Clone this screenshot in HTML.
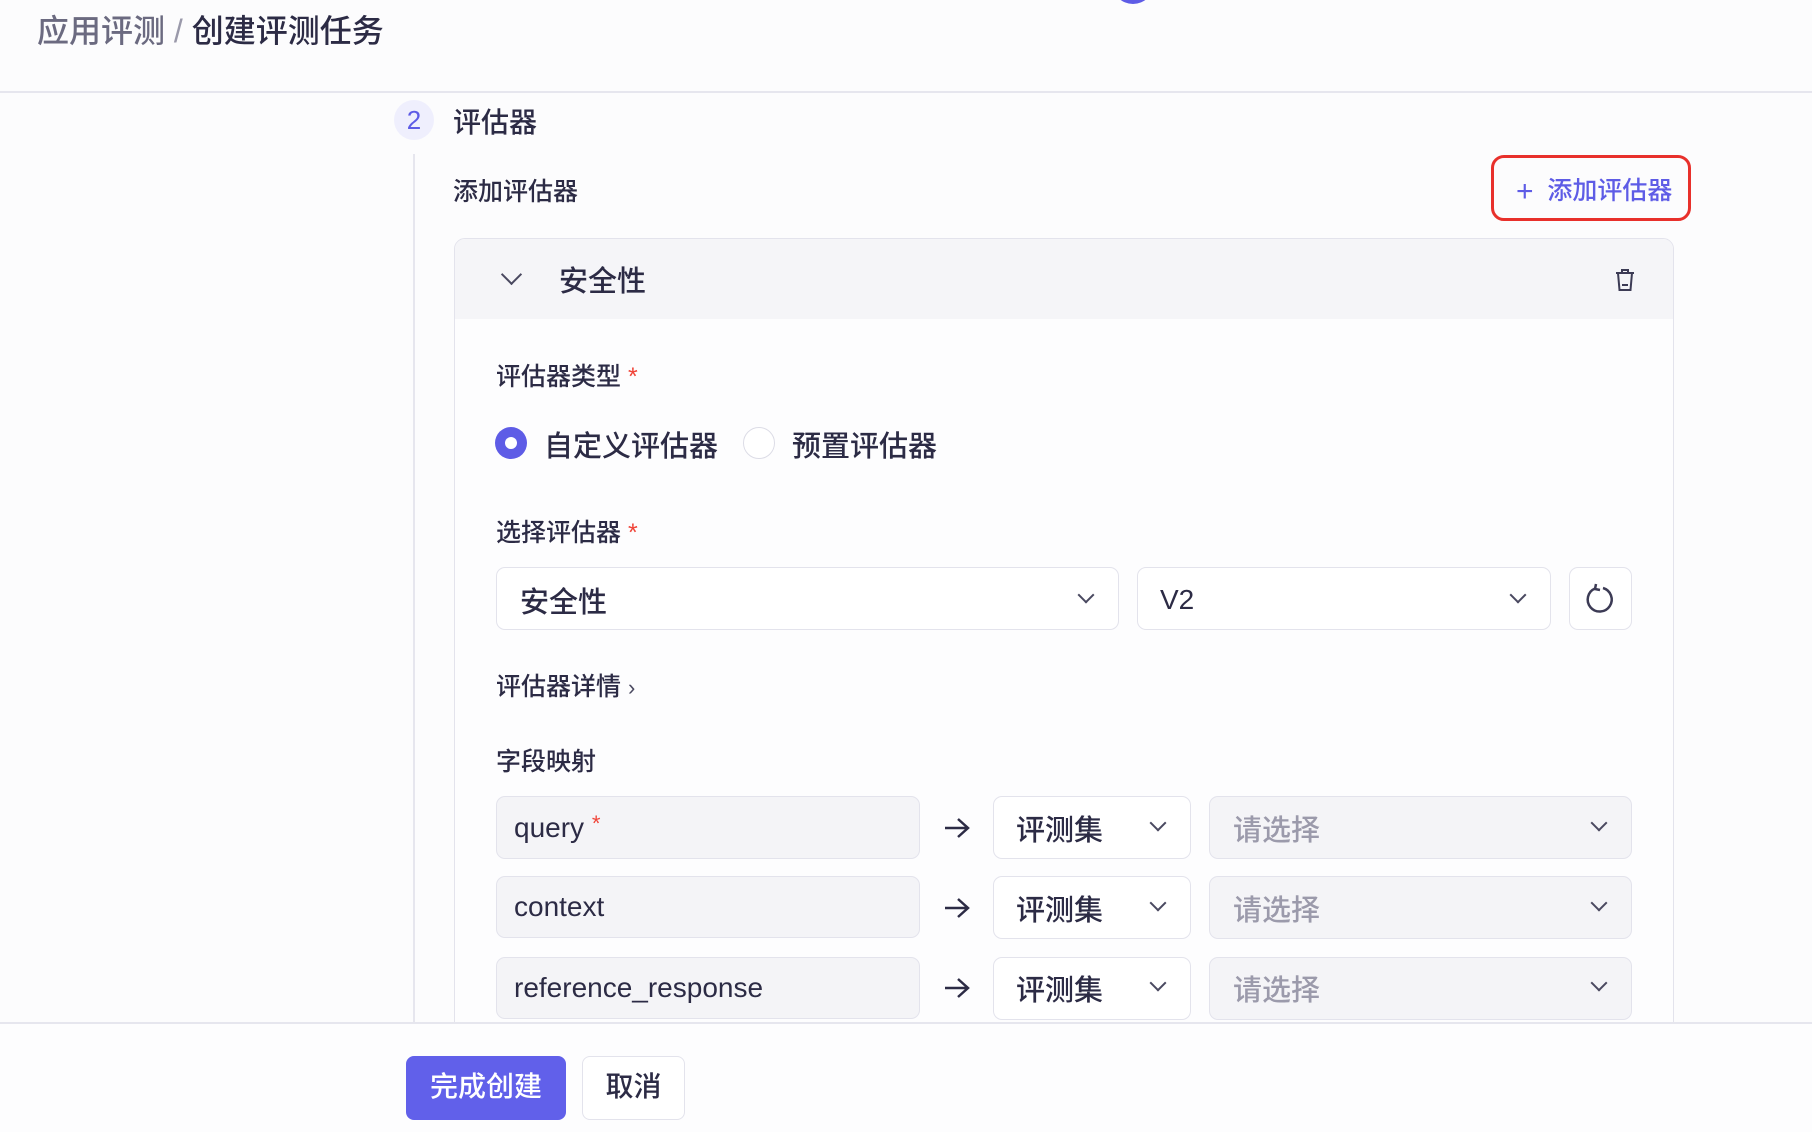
<!DOCTYPE html>
<html><head><meta charset="utf-8"><style>
*{box-sizing:border-box;margin:0;padding:0}
body{width:1812px;height:1132px;overflow:hidden;background:#fcfcfd;font-family:"Liberation Sans","Noto Sans CJK SC",sans-serif;color:#2c2b45;position:relative;font-weight:500}
.a{position:absolute;white-space:nowrap}
.box{position:absolute;border:1.5px solid #e3e3ec;border-radius:9px;background:#fff}
.g{background:#f4f4f7}
.chev{position:absolute;width:12px;height:12px;border-right:2px solid #4a4960;border-bottom:2px solid #4a4960;transform:rotate(45deg)}
.star{color:#f04438}
</style></head><body>
<div class="a" style="left:37px;top:6px;font-size:32px;color:#6b6a80">应用评测 <span style="color:#9a99aa;font-weight:400">/</span> <span style="color:#2c2b45">创建评测任务</span></div>
<div class="a" style="left:1112px;top:-38px;width:42px;height:42px;border-radius:50%;background:#5e5ce6"></div>
<div class="a" style="left:0;top:91px;width:1812px;height:2px;background:#e6e6ee"></div>
<div class="a" style="left:394px;top:100px;width:40px;height:40px;border-radius:50%;background:#efeffd;color:#5e5ce6;font-size:26px;text-align:center;line-height:40px">2</div>
<div class="a" style="left:453px;top:101px;font-size:28px">评估器</div>
<div class="a" style="left:413px;top:154px;width:2px;height:870px;background:#e6e6ee"></div>
<div class="a" style="left:453px;top:172px;font-size:25px">添加评估器</div>
<div class="a" style="left:1491px;top:155px;width:200px;height:66px;border:3px solid #e8302b;border-radius:13px"></div>
<div class="a" style="left:1516px;top:171px;font-size:25px;color:#5e5ce6"><span style="font-size:30px;font-weight:300;position:relative;top:2px">+</span>&nbsp; 添加评估器</div>
<div class="a" style="left:454px;top:238px;width:1220px;height:820px;border:1.5px solid #e3e3ec;border-radius:11px;background:#fdfdfe;overflow:hidden">
 <div style="height:80px;background:#f5f5f8"></div>
</div>
<div class="chev" style="left:504px;top:267px;width:15px;height:15px"></div>
<div class="a" style="left:559px;top:258px;font-size:29px">安全性</div>
<svg class="a" style="left:1614px;top:268px" width="22" height="24" viewBox="0 0 22 24" fill="none" stroke="#3c3b55" stroke-width="2"><path d="M2 5h18M8 5V2h6v3M4 5l1.5 17h11L18 5M8 17h6"/></svg>
<div class="a" style="left:496px;top:357px;font-size:25px">评估器类型 <span class="star">*</span></div>
<div class="a" style="left:495px;top:427px;width:32px;height:32px;border-radius:50%;background:#5e5ce6"><div style="margin:10px;width:12px;height:12px;border-radius:50%;background:#fff"></div></div>
<div class="a" style="left:544px;top:423px;font-size:29px">自定义评估器</div>
<div class="a" style="left:743px;top:427px;width:32px;height:32px;border-radius:50%;border:1.5px solid #dcdce6;background:#fff"></div>
<div class="a" style="left:792px;top:423px;font-size:29px">预置评估器</div>
<div class="a" style="left:496px;top:513px;font-size:25px">选择评估器 <span class="star">*</span></div>
<div class="box" style="left:496px;top:567px;width:623px;height:63px"></div>
<div class="a" style="left:520px;top:579px;font-size:29px">安全性</div>
<div class="chev" style="left:1080px;top:589px"></div>
<div class="box" style="left:1137px;top:567px;width:414px;height:63px"></div>
<div class="a" style="left:1160px;top:584px;font-size:28px">V2</div>
<div class="chev" style="left:1512px;top:589px"></div>
<div class="box" style="left:1569px;top:567px;width:63px;height:63px"></div>
<svg class="a" style="left:1584px;top:582px" width="32" height="33" viewBox="0 0 32 33" fill="none" stroke="#3c3b55" stroke-width="2.5"><path d="M11 6.5A12 12 0 1 0 19 6"/><path d="M12 2l-1 5 5 1"/></svg>
<div class="a" style="left:496px;top:667px;font-size:25px">评估器详情 <span style="font-size:22px;color:#4a4960">›</span></div>
<div class="a" style="left:496px;top:742px;font-size:25px">字段映射</div>

<div class="box g" style="left:496px;top:796px;width:424px;height:63px"></div>
<div class="a" style="left:514px;top:811px;font-size:28px">query <span class="star" style="font-size:22px;vertical-align:6px">*</span></div>
<div class="box g" style="left:496px;top:876px;width:424px;height:62px"></div>
<div class="a" style="left:514px;top:891px;font-size:28px">context</div>
<div class="box g" style="left:496px;top:957px;width:424px;height:62px"></div>
<div class="a" style="left:514px;top:972px;font-size:28px">reference_response</div>

<svg class="a" style="left:943px;top:816px" width="28" height="24" viewBox="0 0 28 24" fill="none" stroke="#2c2b45" stroke-width="2.5"><path d="M2 12h23M15 3l10 9-10 9"/></svg>
<svg class="a" style="left:943px;top:896px" width="28" height="24" viewBox="0 0 28 24" fill="none" stroke="#2c2b45" stroke-width="2.5"><path d="M2 12h23M15 3l10 9-10 9"/></svg>
<svg class="a" style="left:943px;top:976px" width="28" height="24" viewBox="0 0 28 24" fill="none" stroke="#2c2b45" stroke-width="2.5"><path d="M2 12h23M15 3l10 9-10 9"/></svg>

<div class="box" style="left:993px;top:796px;width:198px;height:63px"></div>
<div class="a" style="left:1016px;top:807px;font-size:29px">评测集</div>
<div class="chev" style="left:1152px;top:817px"></div>
<div class="box" style="left:993px;top:876px;width:198px;height:63px"></div>
<div class="a" style="left:1016px;top:887px;font-size:29px">评测集</div>
<div class="chev" style="left:1152px;top:897px"></div>
<div class="box" style="left:993px;top:957px;width:198px;height:63px"></div>
<div class="a" style="left:1016px;top:967px;font-size:29px">评测集</div>
<div class="chev" style="left:1152px;top:977px"></div>

<div class="box g" style="left:1209px;top:796px;width:423px;height:63px"></div>
<div class="a" style="left:1233px;top:807px;font-size:29px;color:#9b9aab">请选择</div>
<div class="chev" style="left:1593px;top:817px"></div>
<div class="box g" style="left:1209px;top:876px;width:423px;height:63px"></div>
<div class="a" style="left:1233px;top:887px;font-size:29px;color:#9b9aab">请选择</div>
<div class="chev" style="left:1593px;top:897px"></div>
<div class="box g" style="left:1209px;top:957px;width:423px;height:63px"></div>
<div class="a" style="left:1233px;top:967px;font-size:29px;color:#9b9aab">请选择</div>
<div class="chev" style="left:1593px;top:977px"></div>

<div class="a" style="left:0;top:1022px;width:1812px;height:110px;background:#fdfdfe;border-top:2px solid #e6e6ee"></div>
<div class="a" style="left:406px;top:1056px;width:160px;height:64px;border-radius:8px;background:#6160ea;color:#fff;font-size:28px;text-align:center;line-height:62px">完成创建</div>
<div class="a" style="left:582px;top:1056px;width:103px;height:64px;border-radius:8px;border:1.5px solid #e3e3ec;background:#fff;font-size:28px;text-align:center;line-height:59px">取消</div>
</body></html>
